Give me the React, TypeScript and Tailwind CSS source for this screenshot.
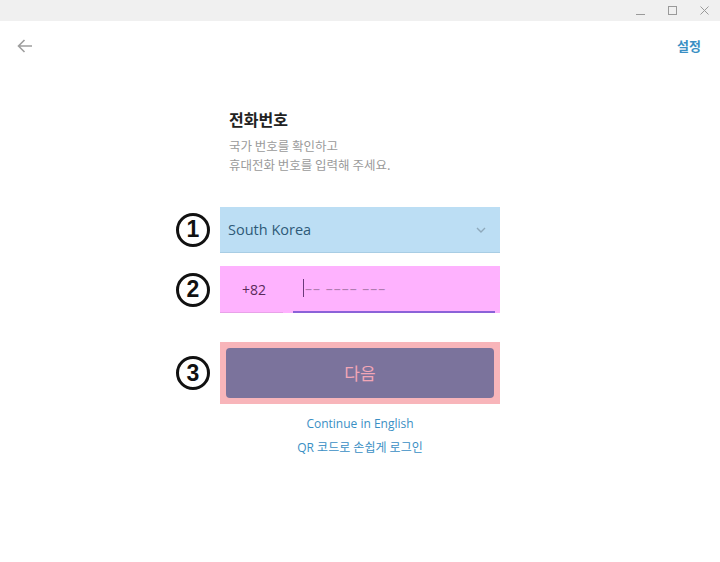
import React from "react";

const ko = { fontFamily: '"Noto Sans CJK KR", "Noto Sans", sans-serif' };
const os = { fontFamily: '"Open Sans", "Noto Sans CJK KR", sans-serif' };

function Num({ n }: { n: string }) {
  return (
    <div
      className="absolute left-[-44px] top-1/2 -translate-y-1/2 w-[34px] h-[34px] rounded-full border-[3.5px] border-[#111] flex items-center justify-center text-[23px] font-bold text-[#111] leading-none"
      style={{ fontFamily: '"Liberation Sans", Arial, sans-serif' }}
    >
      {n}
    </div>
  );
}

export default function App() {
  return (
    <div className="w-[720px] h-[562px] bg-white relative overflow-hidden" style={ko}>
      {/* title bar */}
      <div className="h-[21px] bg-[#f0f0f0] flex items-center justify-end pr-[10px] gap-[21px] text-[#9a9a9a]">
        <svg width="11" height="11" viewBox="0 0 11 11"><path d="M1 9.5h9" stroke="#9a9a9a" strokeWidth="1" /></svg>
        <svg width="11" height="11" viewBox="0 0 11 11"><rect x="1.5" y="1.5" width="8" height="8" fill="none" stroke="#9a9a9a" strokeWidth="1" /></svg>
        <svg width="11" height="11" viewBox="0 0 11 11"><path d="M1.5 1.5l8 8M9.5 1.5l-8 8" stroke="#9a9a9a" strokeWidth="1" /></svg>
      </div>
      {/* header */}
      <div className="h-[50px] flex items-center justify-between pl-[16px] pr-[19px]">
        <svg width="18" height="18" viewBox="0 0 18 18">
          <path d="M16 9H2.5M8.5 3L2.5 9l6 6" fill="none" stroke="#9e9e9e" strokeWidth="1.6" />
        </svg>
        <span className="text-[13px] font-bold text-[#3a8fc4]">설정</span>
      </div>
      {/* content */}
      <div className="w-[280px] mx-auto mt-[37px]">
        <div className="pl-[9px]">
          <div className="text-[16px] font-bold text-[#222] leading-[22px]">전화번호</div>
          <div className="mt-[6px] text-[12.5px] text-[#9a9a9a] leading-[19px]">
            국가 번호를 확인하고
            <br />
            휴대전화 번호를 입력해 주세요.
          </div>
        </div>
        {/* country */}
        <div className="relative mt-[33px] h-[46px] bg-[#bcdef4] border-b border-[#a8cde4] flex items-center justify-between pl-[8px] pr-[13px]">
          <Num n="1" />
          <span className="text-[14.5px] text-[#2e5a78]" style={os}>South Korea</span>
          <svg width="12" height="8" viewBox="0 0 12 8">
            <path d="M2 2l4 4 4-4" fill="none" stroke="#8fa9bb" strokeWidth="1.4" />
          </svg>
        </div>
        {/* phone */}
        <div className="relative mt-[13px] h-[47px] bg-[#feb2fe] flex">
          <Num n="2" />
          <div className="w-[63px] border-b border-[#e8a2e8] flex items-center pl-[22px] text-[14px] text-[#5a2a5a]" style={os}>
            +82
          </div>
          <div className="ml-[10px] mr-[5px] flex-1 border-b-2 border-[#8b62d8] flex items-center pb-[1px]">
            <span className="w-px h-[18px] bg-[#6a3a7a] ml-[10px]" />
            <span className="text-[14px] text-[#b07cb0] tracking-[1px] ml-[1px]" style={os}>–– –––– –––</span>
          </div>
        </div>
        {/* next button */}
        <div className="relative mt-[29px] h-[62px] bg-[#f8b5ba] p-[6px]">
          <Num n="3" />
          <div className="h-full rounded-[4px] bg-[#7b739c] flex items-center justify-center text-[17px] text-[#f2a6b6]">
            다음
          </div>
        </div>
        <div className="mt-[12px] text-center text-[12px] text-[#3a8fc4] leading-[16px]" style={os}>
          Continue in English
        </div>
        <div className="mt-[8px] text-center text-[12px] text-[#3a8fc4] leading-[16px]" style={os}>
          QR 코드로 손쉽게 로그인
        </div>
      </div>
    </div>
  );
}
